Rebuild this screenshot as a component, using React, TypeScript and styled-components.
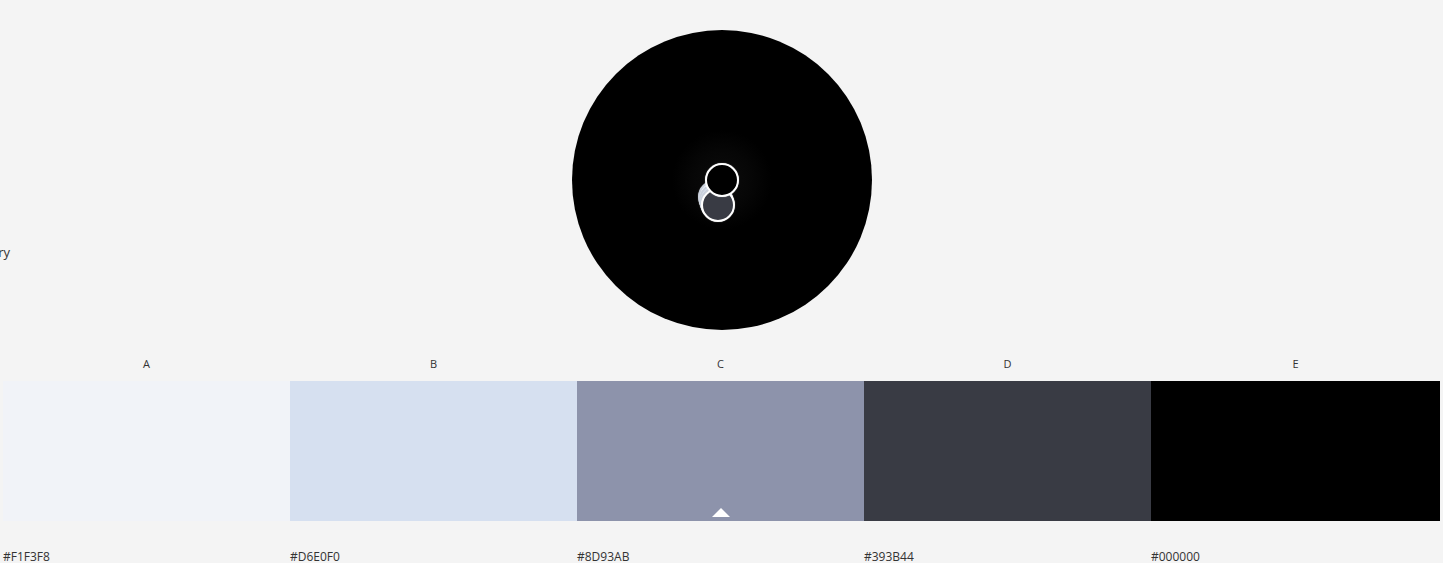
import React from "react";
import styled, { createGlobalStyle } from "styled-components";

const swatches = [
    { key: "A", hex: "#F1F3F8" },
    { key: "B", hex: "#D6E0F0" },
    { key: "C", hex: "#8D93AB", active: true },
    { key: "D", hex: "#393B44" },
    { key: "E", hex: "#000000" },
];

// handle positions on the wheel (relative to the 300px wheel)
const handles = [
    { hex: "#F1F3F8", x: 143, y: 167, ghost: true },
    { hex: "#D6E0F0", x: 144, y: 170, ghost: true },
    { hex: "#8D93AB", x: 145, y: 173, ghost: true },
    { hex: "#393B44", x: 146, y: 175 },
    { hex: "#000000", x: 150, y: 150 },
];

export default function App() {
    return (
        <>
            <GlobalStyle />
            <Page>
                <Top>
                    <Side>
                        <SideLabel>Primary</SideLabel>
                    </Side>
                    <Wheel>
                        <Glow />
                        {handles.map((h, i) => (
                            <Handle
                                key={i}
                                $color={h.hex}
                                $ghost={h.ghost}
                                style={{ left: h.x, top: h.y }}
                            />
                        ))}
                    </Wheel>
                    <div />
                </Top>
                <Palette>
                    {swatches.map((s) => (
                        <Column key={s.key}>
                            <Letter>{s.key}</Letter>
                            <Swatch $color={s.hex}>
                                {s.active && <Marker />}
                            </Swatch>
                            <Hex>{s.hex}</Hex>
                        </Column>
                    ))}
                </Palette>
            </Page>
        </>
    );
}

const GlobalStyle = createGlobalStyle`
    html, body {
        margin: 0;
        padding: 0;
        background: #f4f4f4;
        overflow: hidden;
    }
    body {
        font-family: "Open Sans", "Liberation Sans", sans-serif;
        color: #333;
    }
`;

const Page = styled.div`
    width: 1443px;
    height: 563px;
    overflow: hidden;
    background: #f4f4f4;
`;

const Top = styled.div`
    display: grid;
    grid-template-columns: 1fr 300px 1fr;
    height: 350px;
    padding-top: 30px;
    box-sizing: border-box;
`;

const Side = styled.div`
    min-width: 0;
    overflow: hidden;
`;

const SideLabel = styled.div`
    width: 60px;
    margin: 213px 0 0 -50px;
    text-align: right;
    font-size: 13px;
    color: #333;
    white-space: nowrap;
`;

const Wheel = styled.div`
    position: relative;
    width: 300px;
    height: 300px;
    border-radius: 50%;
    background: #000;
`;

const Glow = styled.div`
    position: absolute;
    left: 100px;
    top: 100px;
    width: 100px;
    height: 100px;
    border-radius: 50%;
    background: radial-gradient(circle, #0c0c0c 0, #060606 30px, #000 50px);
`;

const Handle = styled.div<{ $color: string; $ghost?: boolean }>`
    position: absolute;
    width: 30px;
    height: 30px;
    margin: -17px 0 0 -17px;
    border-radius: 50%;
    background: ${({ $color }) => $color};
    border: 2px solid ${({ $ghost }) => ($ghost ? "#c9d0dc" : "#fff")};
    box-shadow: 0 0 1px rgba(255, 255, 255, 0.6);
`;

const Palette = styled.div`
    display: grid;
    grid-template-columns: repeat(4, 287px) minmax(0, 1fr);
    padding: 0 3px;
`;

const Column = styled.div`
    display: flex;
    flex-direction: column;
    min-width: 0;
`;

const Letter = styled.div`
    height: 31px;
    line-height: 28px;
    text-align: center;
    font-size: 11px;
    color: #333;
`;

const Swatch = styled.div<{ $color: string }>`
    position: relative;
    height: 140px;
    background: ${({ $color }) => $color};
`;

const Marker = styled.div`
    position: absolute;
    left: 50%;
    bottom: 4px;
    margin-left: -9px;
    width: 0;
    height: 0;
    border-left: 9px solid transparent;
    border-right: 9px solid transparent;
    border-bottom: 9px solid #fff;
`;

const Hex = styled.div`
    padding-top: 27px;
    font-size: 12px;
    color: #333;
`;
